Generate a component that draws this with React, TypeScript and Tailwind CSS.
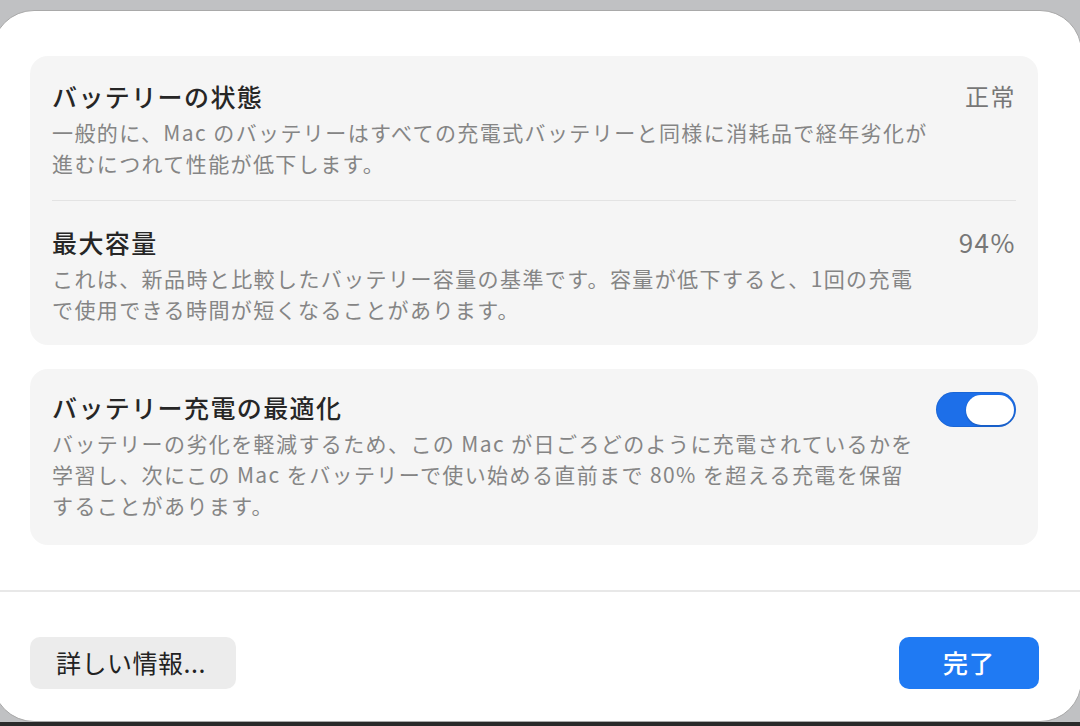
import React from "react";

const font = { fontFamily: '"Noto Sans CJK JP", "Noto Sans", sans-serif' };

function Section({ title, value, lines }: { title: string; value?: React.ReactNode; lines: string[] }) {
  return (
    <div className="flex items-start justify-between">
      <div className="flex flex-col">
        <div className="text-[25px] leading-[32px] font-medium tracking-[1.4px] text-[#262626]">{title}</div>
        <div className="mt-[5px] text-[21px] leading-[31px] tracking-[1.4px] text-[#858585] whitespace-nowrap">
          {lines.map((l, i) => (
            <div key={i}>{l}</div>
          ))}
        </div>
      </div>
      {value}
    </div>
  );
}

export default function App() {
  return (
    <div className="w-[1080px] h-[726px] overflow-hidden bg-[#c0c1c3] flex flex-col" style={font}>
      <div className="mt-[10px] ml-[-8px] w-[1090px] h-[712px] rounded-[42px] bg-white border border-[#a9a9a9] flex flex-col shrink-0">
        <div className="pl-[37px] pr-[43px] pt-[45px] flex flex-col gap-[24px]">
          <div className="rounded-[18px] bg-[#f5f5f5] px-[22px] flex flex-col">
            <div className="pt-[24px] pb-[21px] border-b border-[#e3e3e3]">
              <Section
                title="バッテリーの状態"
                value={<div className="text-[24px] leading-[32px] tracking-[1.5px] text-[#777777]">正常</div>}
                lines={[
                  "一般的に、Mac のバッテリーはすべての充電式バッテリーと同様に消耗品で経年劣化が",
                  "進むにつれて性能が低下します。",
                ]}
              />
            </div>
            <div className="pt-[25px] pb-[20px]">
              <Section
                title="最大容量"
                value={<div className="text-[26px] leading-[32px] tracking-[1.5px] text-[#777777]">94%</div>}
                lines={[
                  "これは、新品時と比較したバッテリー容量の基準です。容量が低下すると、1回の充電",
                  "で使用できる時間が短くなることがあります。",
                ]}
              />
            </div>
          </div>
          <div className="rounded-[18px] bg-[#f5f5f5] px-[22px] pt-[22px] pb-[24px]">
            <Section
              title="バッテリー充電の最適化"
              value={
                <div className="mt-[1px] w-[80px] h-[35px] rounded-full bg-[#1d6fe9] flex items-center justify-end px-[2px] shadow-[inset_0_0_0_1px_rgba(0,0,0,0.08)]">
                  <div className="w-[48px] h-[30px] rounded-full bg-white shadow-[0_1px_2px_rgba(0,0,0,0.2)]" />
                </div>
              }
              lines={[
                "バッテリーの劣化を軽減するため、この Mac が日ごろどのように充電されているかを",
                "学習し、次にこの Mac をバッテリーで使い始める直前まで 80% を超える充電を保留",
                "することがあります。",
              ]}
            />
          </div>
        </div>
        <div className="mt-[45px] h-[2px] bg-[#e8e8e8]" />
        <div className="pl-[37px] pr-[42px] pt-[45px] flex items-center justify-between">
          <div className="w-[206px] h-[52px] rounded-[10px] bg-[#ececec] flex items-center pl-[26px] text-[25px] tracking-[0.5px] text-[#222222]">
            詳しい情報...
          </div>
          <div className="w-[140px] h-[52px] rounded-[10px] bg-[#1f7af3] flex items-center justify-center text-[25px] font-medium tracking-[1px] text-white">
            完了
          </div>
        </div>
      </div>
      <div className="flex-1 bg-[#2a2a2a]" />
    </div>
  );
}
